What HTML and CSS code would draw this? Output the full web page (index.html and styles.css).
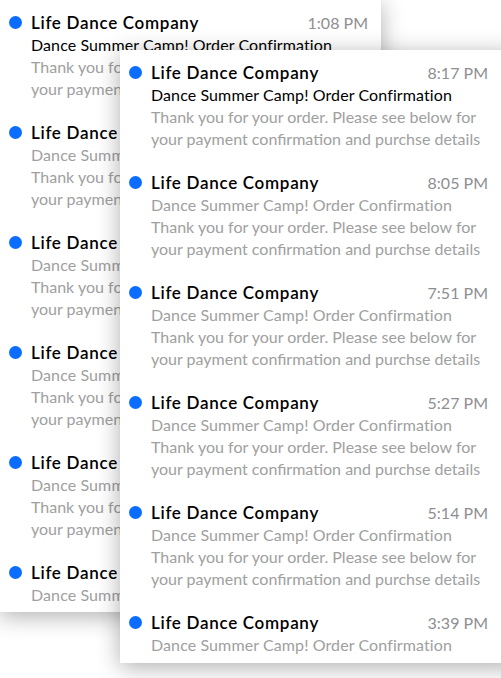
FILE: index.html
```html
<!DOCTYPE html>
<html>
<head>
<meta charset="utf-8">
<link rel="stylesheet" href="styles.css">
</head>
<body>
<div class="stage">
  <div class="panel back">
    <div class="row">
      <div class="head"><span class="dot"></span><span class="from">Life Dance Company</span><span class="time">1:08 PM</span></div>
      <div class="subject unread">Dance Summer Camp! Order Confirmation</div>
      <div class="preview">Thank you for your order. Please see below for</div>
      <div class="preview">your payment confirmation and purchse details</div>
    </div>
    <div class="row">
      <div class="head"><span class="dot"></span><span class="from">Life Dance Company</span><span class="time">12:51 PM</span></div>
      <div class="subject">Dance Summer Camp! Order Confirmation</div>
      <div class="preview">Thank you for your order. Please see below for</div>
      <div class="preview">your payment confirmation and purchse details</div>
    </div>
    <div class="row">
      <div class="head"><span class="dot"></span><span class="from">Life Dance Company</span><span class="time">12:40 PM</span></div>
      <div class="subject">Dance Summer Camp! Order Confirmation</div>
      <div class="preview">Thank you for your order. Please see below for</div>
      <div class="preview">your payment confirmation and purchse details</div>
    </div>
    <div class="row">
      <div class="head"><span class="dot"></span><span class="from">Life Dance Company</span><span class="time">12:22 PM</span></div>
      <div class="subject">Dance Summer Camp! Order Confirmation</div>
      <div class="preview">Thank you for your order. Please see below for</div>
      <div class="preview">your payment confirmation and purchse details</div>
    </div>
    <div class="row">
      <div class="head"><span class="dot"></span><span class="from">Life Dance Company</span><span class="time">11:58 AM</span></div>
      <div class="subject">Dance Summer Camp! Order Confirmation</div>
      <div class="preview">Thank you for your order. Please see below for</div>
      <div class="preview">your payment confirmation and purchse details</div>
    </div>
    <div class="row last">
      <div class="head"><span class="dot"></span><span class="from">Life Dance Company</span><span class="time">11:30 AM</span></div>
      <div class="subject">Dance Summer Camp! Order Confirmation</div>
    </div>
  </div>

  <div class="panel front">
    <div class="row">
      <div class="head"><span class="dot"></span><span class="from">Life Dance Company</span><span class="time">8:17 PM</span></div>
      <div class="subject unread">Dance Summer Camp! Order Confirmation</div>
      <div class="preview">Thank you for your order. Please see below for</div>
      <div class="preview">your payment confirmation and purchse details</div>
    </div>
    <div class="row">
      <div class="head"><span class="dot"></span><span class="from">Life Dance Company</span><span class="time">8:05 PM</span></div>
      <div class="subject">Dance Summer Camp! Order Confirmation</div>
      <div class="preview">Thank you for your order. Please see below for</div>
      <div class="preview">your payment confirmation and purchse details</div>
    </div>
    <div class="row">
      <div class="head"><span class="dot"></span><span class="from">Life Dance Company</span><span class="time">7:51 PM</span></div>
      <div class="subject">Dance Summer Camp! Order Confirmation</div>
      <div class="preview">Thank you for your order. Please see below for</div>
      <div class="preview">your payment confirmation and purchse details</div>
    </div>
    <div class="row">
      <div class="head"><span class="dot"></span><span class="from">Life Dance Company</span><span class="time">5:27 PM</span></div>
      <div class="subject">Dance Summer Camp! Order Confirmation</div>
      <div class="preview">Thank you for your order. Please see below for</div>
      <div class="preview">your payment confirmation and purchse details</div>
    </div>
    <div class="row">
      <div class="head"><span class="dot"></span><span class="from">Life Dance Company</span><span class="time">5:14 PM</span></div>
      <div class="subject">Dance Summer Camp! Order Confirmation</div>
      <div class="preview">Thank you for your order. Please see below for</div>
      <div class="preview">your payment confirmation and purchse details</div>
    </div>
    <div class="row last">
      <div class="head"><span class="dot"></span><span class="from">Life Dance Company</span><span class="time">3:39 PM</span></div>
      <div class="subject">Dance Summer Camp! Order Confirmation</div>
    </div>
  </div>
</div>
</body>
</html>
```
FILE: styles.css
```css
html, body {
  margin: 0;
  padding: 0;
  background: #ffffff;
  overflow: hidden;
}
body {
  font-family: Lato, "Noto Sans", sans-serif;
  width: 501px;
  height: 678px;
}
.stage {
  position: relative;
  width: 501px;
  height: 678px;
}
.panel {
  background: #ffffff;
  height: 612px;
  overflow: hidden;
  box-shadow: 0 4px 22px rgba(0, 0, 0, 0.32);
  box-sizing: border-box;
}
.back {
  width: 381px;
}
.front {
  position: absolute;
  left: 120px;
  top: 50px;
  width: 400px;
  height: 613px;
}
.row {
  padding: 12px 13px 10px 31px;
  width: 381px;
  box-sizing: border-box;
}
.head {
  position: relative;
  display: flex;
  align-items: baseline;
  height: 22px;
  line-height: 22px;
}
.dot {
  position: absolute;
  left: -22px;
  top: 4px;
  width: 13px;
  height: 13px;
  border-radius: 50%;
  background: #0a6dff;
}
.from {
  flex: 1;
  font-size: 17px;
  font-weight: 600;
  letter-spacing: 0.7px;
  color: #000;
  white-space: nowrap;
}
.time {
  font-size: 16px;
  color: #8e8e93;
  white-space: nowrap;
}
.subject, .preview {
  font-size: 16px;
  line-height: 22px;
  height: 22px;
  white-space: nowrap;
  color: #a0a0a0;
}
.subject {
  letter-spacing: 0.1px;
}
.preview {
  letter-spacing: 0;
}
.subject.unread {
  color: #000;
}
```
